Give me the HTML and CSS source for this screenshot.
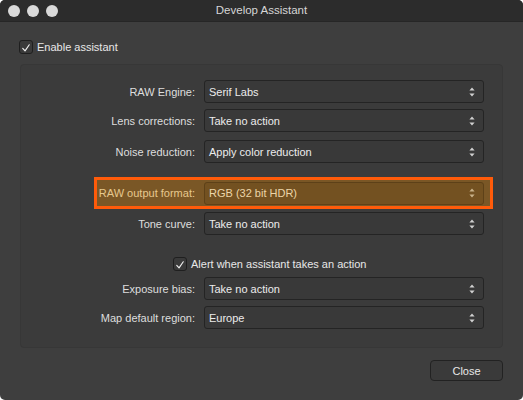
FILE: index.html
```html
<!DOCTYPE html>
<html>
<head>
<meta charset="utf-8">
<link rel="stylesheet" href="styles.css">
</head>
<body>
<div class="window">
  <div class="titlebar">
    <div class="lights"><span class="light"></span><span class="light"></span><span class="light"></span></div>
    <div class="title">Develop Assistant</div>
  </div>
  <div class="content">
    <label class="check-row enable">
      <span class="checkbox"><svg width="14" height="14" viewBox="0 0 14 14"><path d="M3.2 7.4 L5.9 10.4 L10.8 3.2" fill="none" stroke="#f2f2f2" stroke-width="1.3" stroke-linecap="round" stroke-linejoin="round"/></svg></span>
      <span class="check-text">Enable assistant</span>
    </label>
    <div class="panel">
      <div class="row r1"><span class="label">RAW Engine:</span><div class="popup"><span>Serif Labs</span><svg class="arrows" width="6" height="10" viewBox="0 0 6 10"><path d="M3 0.5 L5.6 3.6 H0.4 Z M3 9.5 L5.6 6.4 H0.4 Z" fill="#d0d0d0"/></svg></div></div>
      <div class="row r2"><span class="label">Lens corrections:</span><div class="popup"><span>Take no action</span><svg class="arrows" width="6" height="10" viewBox="0 0 6 10"><path d="M3 0.5 L5.6 3.6 H0.4 Z M3 9.5 L5.6 6.4 H0.4 Z" fill="#d0d0d0"/></svg></div></div>
      <div class="row r3"><span class="label">Noise reduction:</span><div class="popup"><span>Apply color reduction</span><svg class="arrows" width="6" height="10" viewBox="0 0 6 10"><path d="M3 0.5 L5.6 3.6 H0.4 Z M3 9.5 L5.6 6.4 H0.4 Z" fill="#d0d0d0"/></svg></div></div>
      <div class="row highlight"><span class="label">RAW output format:</span><div class="popup hl"><span>RGB (32 bit HDR)</span><svg class="arrows" width="6" height="10" viewBox="0 0 6 10"><path d="M3 0.5 L5.6 3.6 H0.4 Z M3 9.5 L5.6 6.4 H0.4 Z" fill="#c9b28a"/></svg></div></div>
      <div class="row r5"><span class="label">Tone curve:</span><div class="popup"><span>Take no action</span><svg class="arrows" width="6" height="10" viewBox="0 0 6 10"><path d="M3 0.5 L5.6 3.6 H0.4 Z M3 9.5 L5.6 6.4 H0.4 Z" fill="#d0d0d0"/></svg></div></div>
      <label class="check-row alert">
        <span class="checkbox"><svg width="14" height="14" viewBox="0 0 14 14"><path d="M3.2 7.4 L5.9 10.4 L10.8 3.2" fill="none" stroke="#f2f2f2" stroke-width="1.3" stroke-linecap="round" stroke-linejoin="round"/></svg></span>
        <span class="check-text">Alert when assistant takes an action</span>
      </label>
      <div class="row r6"><span class="label">Exposure bias:</span><div class="popup"><span>Take no action</span><svg class="arrows" width="6" height="10" viewBox="0 0 6 10"><path d="M3 0.5 L5.6 3.6 H0.4 Z M3 9.5 L5.6 6.4 H0.4 Z" fill="#d0d0d0"/></svg></div></div>
      <div class="row r7"><span class="label">Map default region:</span><div class="popup"><span>Europe</span><svg class="arrows" width="6" height="10" viewBox="0 0 6 10"><path d="M3 0.5 L5.6 3.6 H0.4 Z M3 9.5 L5.6 6.4 H0.4 Z" fill="#d0d0d0"/></svg></div></div>
    </div>
    <div class="footer"><button class="close">Close</button></div>
  </div>
</div>
</body>
</html>
```

FILE: styles.css
```css
html, body {
  margin: 0;
  padding: 0;
  background: #ffffff;
}
body {
  font-family: "Liberation Sans", Arial, sans-serif;
  font-size: 11px;
  color: #e6e6e6;
}
.window {
  width: 523px;
  height: 400px;
  background: #3e3e3e;
  border-radius: 5px;
  overflow: hidden;
  display: flex;
  flex-direction: column;
}
.titlebar {
  height: 22px;
  flex: none;
  background: #2c2c2c;
  border-bottom: 1px solid #262626;
  box-sizing: border-box;
  display: flex;
  align-items: center;
  position: relative;
}
.lights {
  display: flex;
  gap: 7px;
  padding-left: 8px;
}
.light {
  width: 12px;
  height: 12px;
  border-radius: 50%;
  background: #d9d9d9;
}
.title {
  position: absolute;
  left: 0;
  right: 0;
  top: 0;
  height: 21px;
  line-height: 21px;
  text-align: center;
  font-size: 11.5px;
  color: #d6d6d6;
}
.content {
  display: flex;
  flex-direction: column;
  padding: 18px 20px 0 20px;
}
.check-row {
  display: flex;
  align-items: center;
  height: 14px;
}
.enable {
  margin-left: -1px;
}
.checkbox {
  width: 14px;
  height: 14px;
  box-sizing: border-box;
  border: 1px solid #1f1f1f;
  border-radius: 3px;
  background: #3a3a3a;
  display: flex;
}
.check-text {
  margin-left: 4px;
  color: #e8e8e8;
}
.panel {
  margin-top: 10px;
  height: 284px;
  box-sizing: border-box;
  background: #3b3b3b;
  border: 1px solid #373737;
  border-radius: 4px;
  display: flex;
  flex-direction: column;
  padding-top: 15px;
}
.row {
  display: grid;
  grid-template-columns: 174px 280px;
  column-gap: 9px;
  align-items: center;
}
.label {
  text-align: right;
  color: #dedede;
}
.popup {
  height: 23px;
  box-sizing: border-box;
  border: 1px solid #242424;
  border-radius: 3px;
  background: #393939;
  display: flex;
  align-items: center;
  justify-content: space-between;
  padding: 0 8px 0 4px;
  color: #ececec;
}
.r2 { margin-top: 6px; }
.r3 { margin-top: 8px; }
.highlight {
  margin-top: 14px;
  margin-left: 73px;
  width: 399px;
  height: 32px;
  box-sizing: border-box;
  border: 3px solid #ff5b0a;
  background: #7a5726;
  grid-template-columns: 98px 280px;
  padding-top: 0;
}
.highlight .label {
  color: #e6c88e;
}
.popup.hl {
  background: #735121;
  border-color: #5e4118;
  color: #ecd5a8;
}
.r5 { margin-top: 3px; }
.alert {
  margin-top: 22px;
  margin-left: 152px;
}
.r6 { margin-top: 6px; }
.r7 { margin-top: 6px; }
.footer {
  display: flex;
  justify-content: flex-end;
  margin-top: 12px;
}
.close {
  width: 73px;
  height: 21px;
  box-sizing: border-box;
  border: 1px solid #222222;
  border-radius: 4px;
  background: #3a3a3a;
  color: #e8e8e8;
  font-family: "Liberation Sans", Arial, sans-serif;
  font-size: 11px;
  padding: 0;
}
```
